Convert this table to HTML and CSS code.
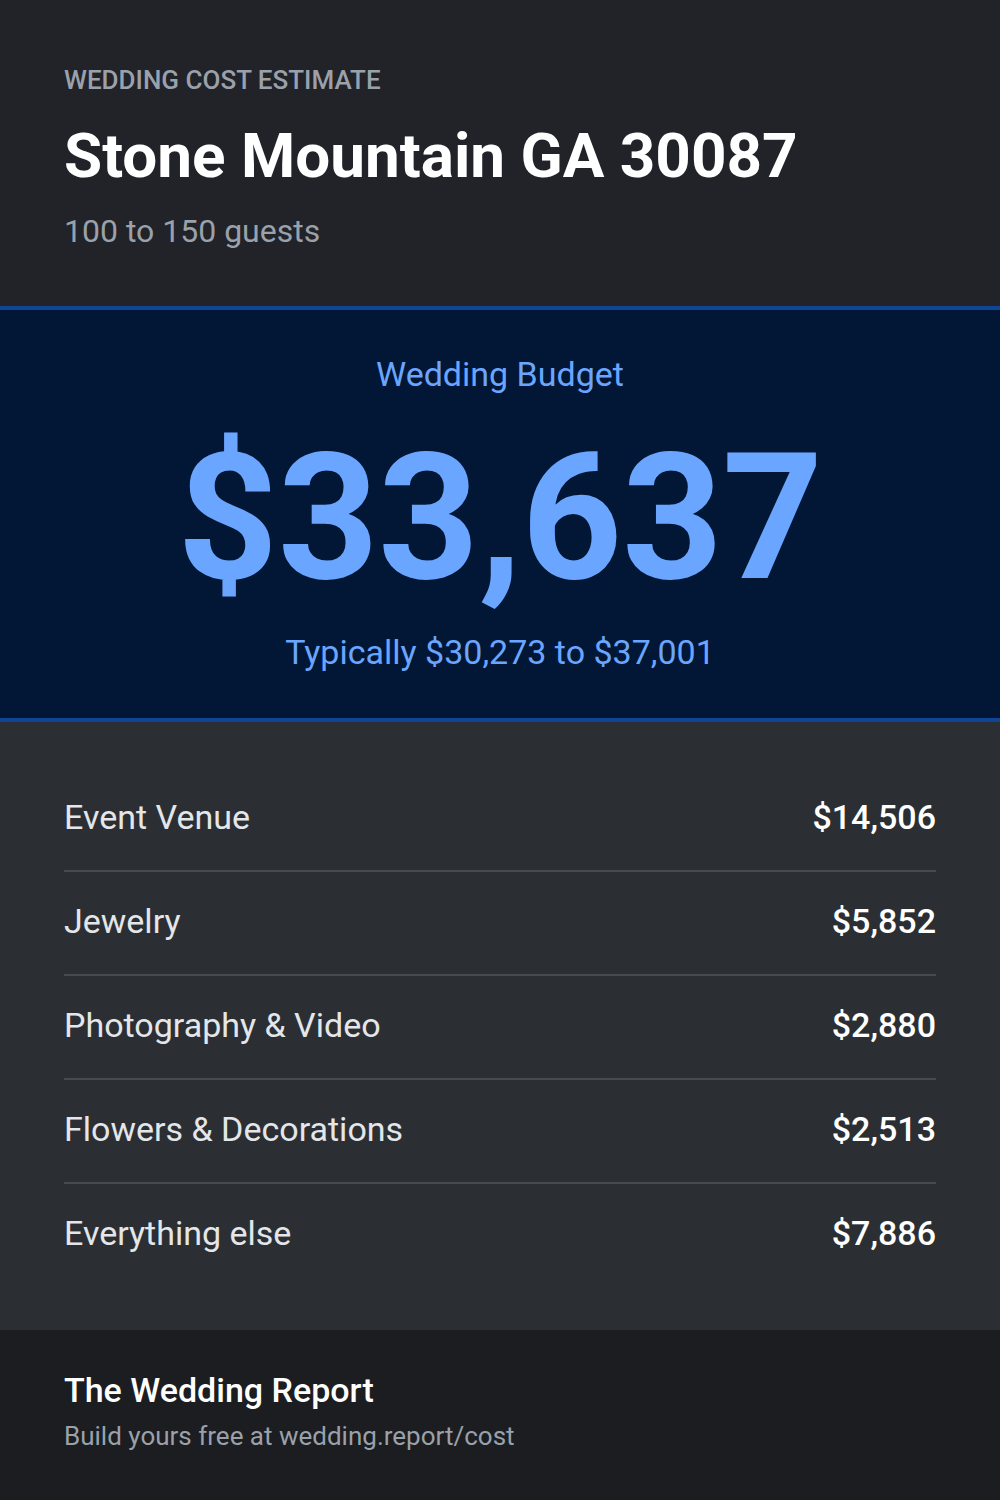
FILE: index.html
```html
<!DOCTYPE html>
<html lang="en">
<head>
    <meta charset="UTF-8">
    <meta name="viewport" content="width=device-width, initial-scale=1.0">
    <title>Wedding Cost Estimate - Stone Mountain GA 30087</title>
    <link rel="stylesheet" href="styles.css">
</head>
<body>
    <div class="card">
        <div class="header">
            <div class="eyebrow">Wedding Cost Estimate</div>
            <h1 class="place">Stone Mountain GA 30087</h1>
            <div class="guests">100 to 150 guests</div>
        </div>

        <div class="budget">
            <div class="budget-label">Wedding Budget</div>
            <div class="budget-total">$33,637</div>
            <div class="budget-range">Typically $30,273 to $37,001</div>
        </div>

        <div class="items">
            <div class="item">
                <span class="item-name">Event Venue</span>
                <span class="item-cost">$14,506</span>
            </div>
            <div class="item">
                <span class="item-name">Jewelry</span>
                <span class="item-cost">$5,852</span>
            </div>
            <div class="item">
                <span class="item-name">Photography &amp; Video</span>
                <span class="item-cost">$2,880</span>
            </div>
            <div class="item">
                <span class="item-name">Flowers &amp; Decorations</span>
                <span class="item-cost">$2,513</span>
            </div>
            <div class="item">
                <span class="item-name">Everything else</span>
                <span class="item-cost">$7,886</span>
            </div>
        </div>

        <div class="footer">
            <div class="brand">The Wedding Report</div>
            <div class="cta">Build yours free at wedding.report/cost</div>
        </div>
    </div>
</body>
</html>
```

FILE: styles.css
```css
body {
    margin: 0;
    padding: 0;
    background-color: #1b1d20;
    font-family: Roboto, "Liberation Sans", Arial, sans-serif;
}
.card {
    width: 1000px;
    height: 1500px;
    display: flex;
    flex-direction: column;
}
.header {
    background-color: #212328;
    padding: 64px 64px 0 64px;
    height: 242px;
    border-bottom: 4px solid #0f4597;
}
.eyebrow {
    color: #9aa1ab;
    font-size: 26px;
    font-weight: 500;
    line-height: 32px;
    text-transform: uppercase;
}
.place {
    margin: 23px 0 0 0;
    color: #fff;
    font-size: 62px;
    font-weight: 700;
    line-height: 74px;
}
.guests {
    margin-top: 18px;
    color: #9aa1ab;
    font-size: 32px;
    line-height: 40px;
}
.budget {
    background-color: #021735;
    border-bottom: 4px solid #0f4597;
    height: 408px;
    text-align: center;
    color: #6aa6ff;
    display: flex;
    flex-direction: column;
    align-items: center;
}
.budget-label {
    margin-top: 44px;
    font-size: 34px;
    line-height: 40px;
}
.budget-total {
    margin-top: 24px;
    font-size: 176px;
    font-weight: 700;
    line-height: 200px;
    letter-spacing: -0.5px;
}
.budget-range {
    margin-top: 14px;
    font-size: 34px;
    line-height: 40px;
}
.items {
    background-color: #2b2f34;
    padding: 46px 64px 44px 64px;
    flex: 1;
}
.item {
    display: flex;
    justify-content: space-between;
    align-items: center;
    padding: 29px 0 33px 0;
    line-height: 40px;
    border-bottom: 2px solid #464a52;
}
.item:last-child {
    border-bottom: none;
}
.item-name {
    color: #e4e6ea;
    font-size: 34px;
}
.item-cost {
    color: #fff;
    font-size: 34px;
    font-weight: 500;
}
.footer {
    background-color: #1b1d20;
    height: 170px;
    padding: 40px 64px 0 64px;
    box-sizing: border-box;
}
.brand {
    color: #fff;
    font-size: 34px;
    font-weight: 500;
    line-height: 40px;
}
.cta {
    margin-top: 10px;
    color: #9aa1ab;
    font-size: 26px;
    line-height: 32px;
}
```
